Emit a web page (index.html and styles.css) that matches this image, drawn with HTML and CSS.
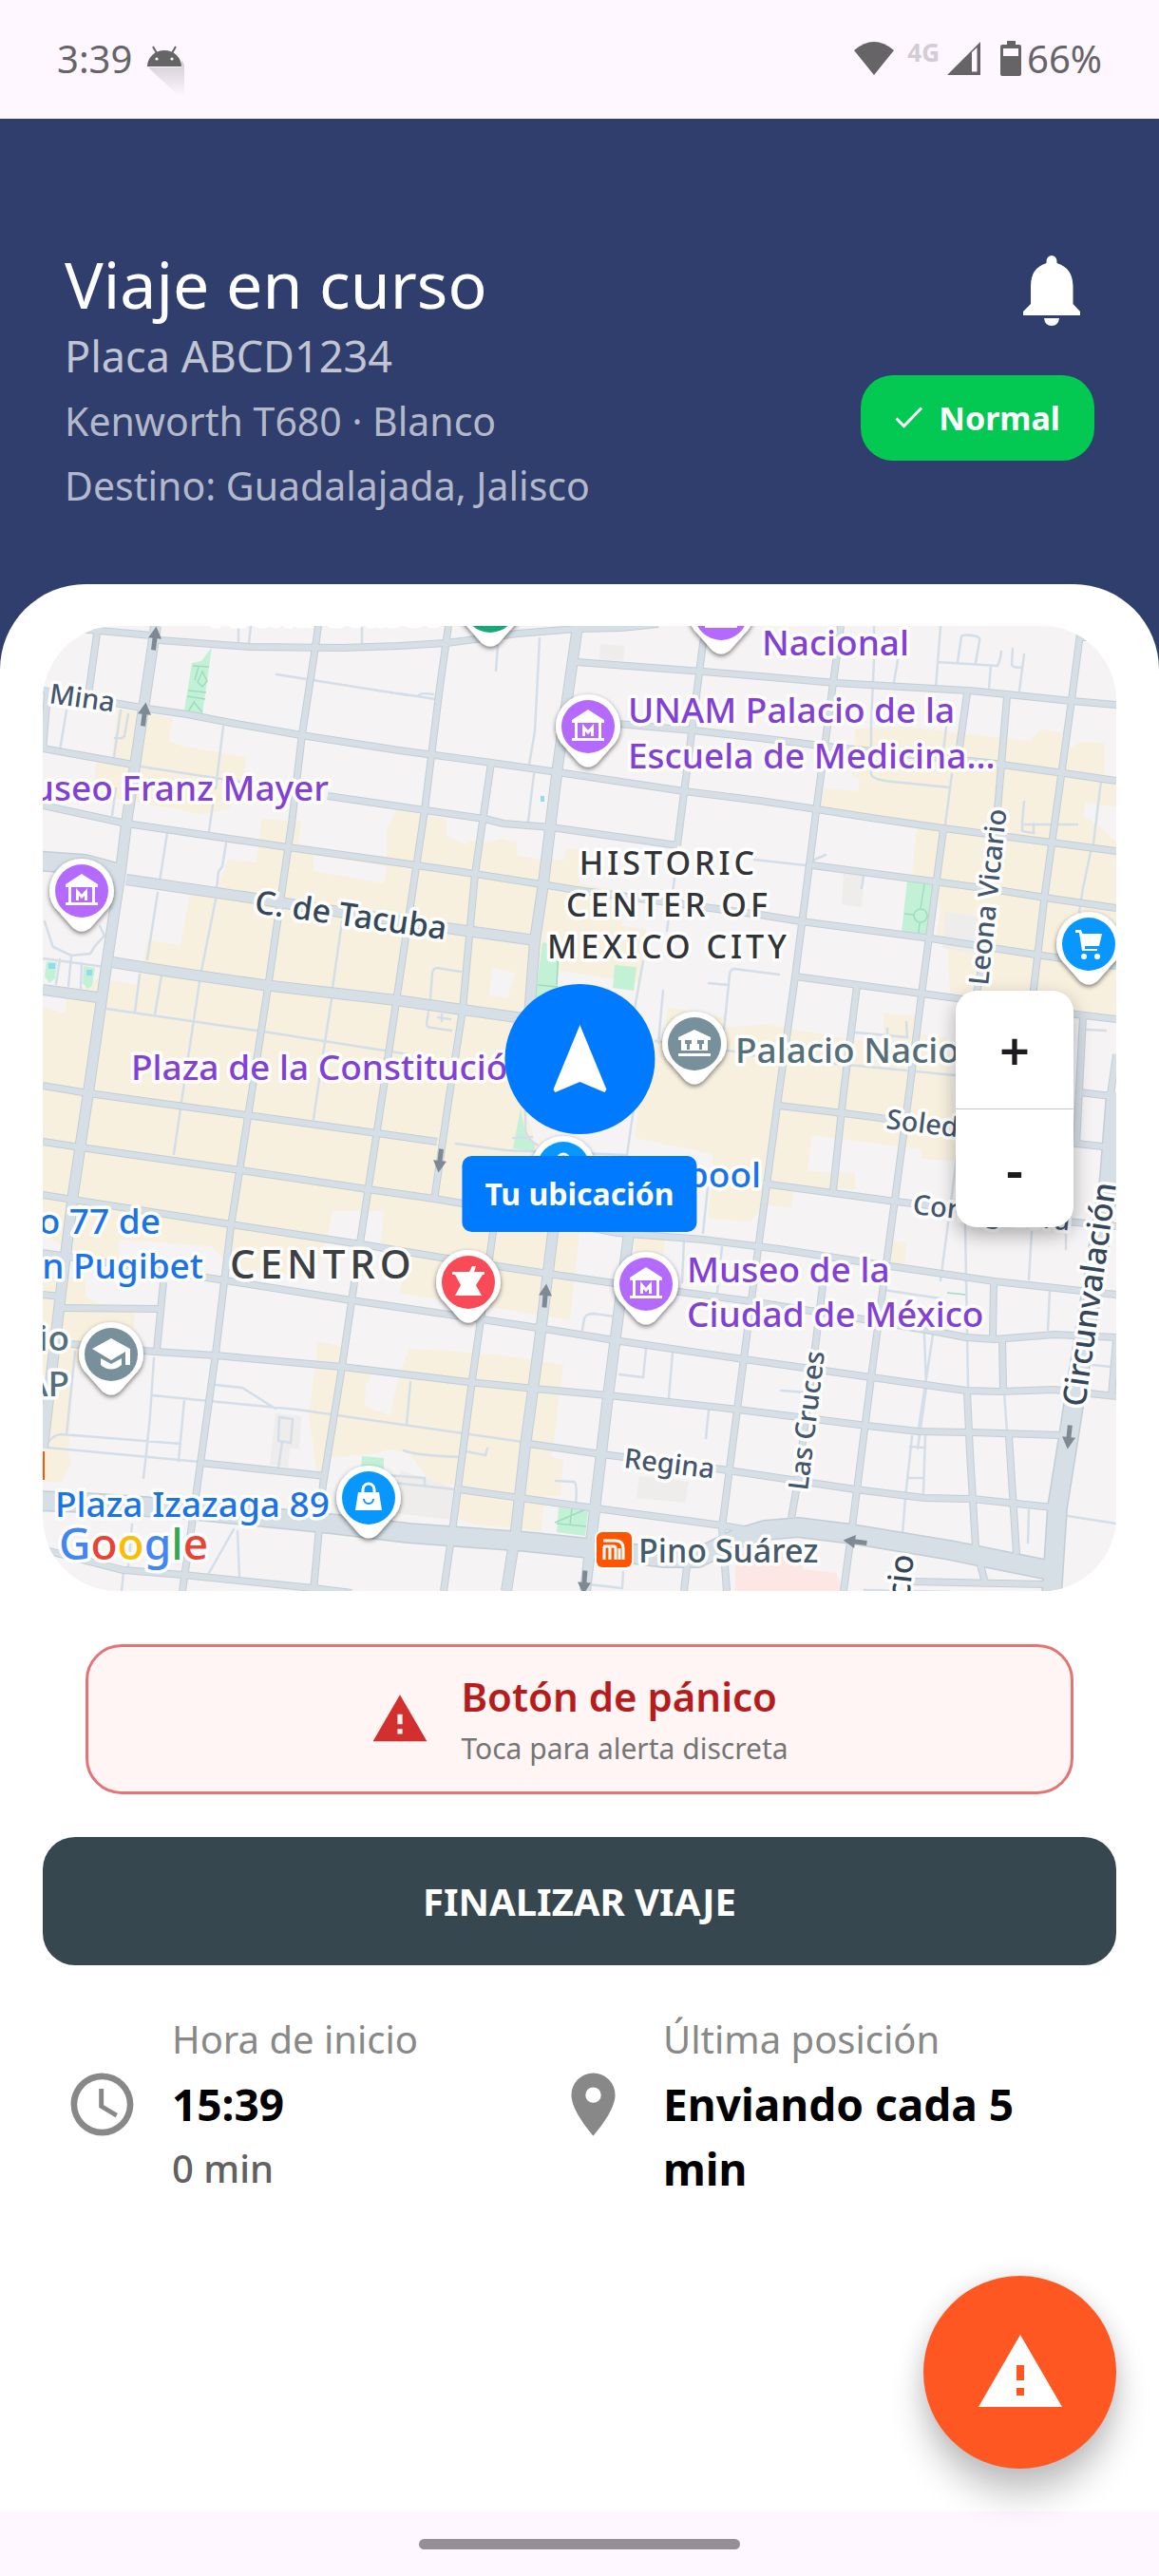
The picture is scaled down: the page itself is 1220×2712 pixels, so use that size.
FILE: index.html
```html
<!DOCTYPE html>
<html lang="es">
<head>
	<meta charset="utf-8">
	<meta name="viewport" content="width=device-width, initial-scale=1">
	<title>Viaje en curso</title>
	<link rel="stylesheet" href="styles.css">
</head>
<body>
	<div class="status-bar">
		<div class="status-left">
			<span>3:39</span>
			<svg class="ico-android" width="40" height="54" viewBox="0 0 40 54">
				<defs><linearGradient id="fade" x1="0" y1="0" x2="0" y2="1"><stop offset="0" stop-color="#676468" stop-opacity=".3"/><stop offset="1" stop-color="#676468" stop-opacity="0"/></linearGradient></defs>
				<path d="M1 24L33 54H39V21L36 16V24z" fill="url(#fade)"/>
				<path d="M0 23a18 17 0 0 1 36 0z" fill="#676468"/>
				<path d="M6 2l4 7M30 2l-4 7" stroke="#676468" stroke-width="2"/>
				<circle cx="10" cy="15" r="1.6" fill="#fef7ff"/><circle cx="26" cy="15" r="1.6" fill="#fef7ff"/>
			</svg>
		</div>
		<div class="status-right">
			<svg class="ico-wifi" width="42" height="36" viewBox="0 0 42 36"><path d="M0 9Q21-9 42 9L21 35z" fill="#676468"/></svg>
			<span class="net">4G</span>
			<svg class="ico-signal" width="36" height="36" viewBox="0 0 36 36"><path d="M0 35L35 0V35zM26 11V31.500H31.500V6z" fill="#676468" fill-rule="evenodd"/></svg>
			<svg class="ico-battery" width="22" height="38" viewBox="0 0 22 38"><path d="M7 0h9v4h4q2 0 2 2v29q0 2-2 2H2q-2 0-2-2V6q0-2 2-2h5zM3 8v8h16V8z" fill="#676468" fill-rule="evenodd"/></svg>
			<span class="percent">66%</span>
		</div>
	</div>

	<header class="header">
		<div class="trip">
			<h1>Viaje en curso</h1>
			<p class="plate">Placa ABCD1234</p>
			<p class="detail">Kenworth T680 · Blanco</p>
			<p class="detail">Destino: Guadalajada, Jalisco</p>
		</div>
		<div class="header-side">
			<button class="bell" type="button" aria-label="Notificaciones">
				<svg width="60" height="74" viewBox="0 0 60 74"><path d="M24.500 8V6a5.500 6 0 0 1 11 0v2Q52 13 52.500 32V51L60 59V63H0V59L8 51V32Q8 13 24.500 8zM22 66H38Q37 74 30 74T22 66z" fill="#fff"/></svg>
			</button>
			<div class="badge">
				<svg width="30" height="24" viewBox="0 0 30 24"><path d="M1.500 12.500L9.500 20.500L28 1.500" fill="none" stroke="#fff" stroke-width="3"/></svg>
				<span>Normal</span>
			</div>
		</div>
	</header>

	<main class="sheet">
		<section class="map">
			<svg class="map-canvas" viewBox="45 659 1130 1016" preserveAspectRatio="xMidYMid slice">
				<defs>
					<filter id="drop" x="-30%" y="-30%" width="160%" height="160%"><feDropShadow dx="0" dy="2" stdDeviation="2.500" flood-opacity=".55"/></filter>
					<path id="drop-shape" d="M0-34A34 34 0 0 1 34 0Q34 13 24 22L9 39Q0 46-9 39L-24 22Q-34 13-34 0A34 34 0 0 1 0-34z" fill="#fff" filter="url(#drop)"/>
					<g id="museum">
						<use href="#drop-shape"/><circle r="28" fill="#b469ff"/>
						<path d="M0-18L17-7V-4H-17V-7zM-14-4h3V12h-3zM11-4h3V12h-3zM-17 12H17V15H-17z" fill="#fff"/>
						<path d="M-4.500 10V1L0 6L4.500 1V10" fill="none" stroke="#fff" stroke-width="3"/>
					</g>
					<path id="arrow" d="M-2.500 12.500V0H-7L0-12.500L7 0H2.500V12.500z" fill="#7f8994"/>
				</defs>
				<rect x="45" y="659" width="1130" height="1016" fill="#f5f3f4"/>

				<!-- zonas -->
				<g fill="#f7f0df">
					<path d="M124 746L182 756L178 780L190 785L259 797L256 825L240 852L212 857L98 836L101 803L117 800z"/>
					<path d="M417 853L470 862L470 880L492 890L493 885L512 887L528 883L544 887V900L568 905L594 905L596 894L614 894L610 930L655 938L654 975L680 978L675 1035L590 1022L560 1060L550 1160L563 1200L560 1292L610 1295L600 1390L540 1380L420 1362L432 1322L400 1315L404 1275L350 1275L345 1300L330 1345L245 1335L222 1312L125 1305V1330L80 1318L45 1300V1060L68 1067L70 1050L103 1030L145 1037L155 990L190 995L200 940L227 940L240 905L270 908L275 862L317 865L314 888L407 905V875z"/>
					<path d="M703 1060L765 1072V1082L804 1078L930 1100V1067L963 1069L960 1088L997 1092L1010 1222L970 1220V1210L855 1195L850 1233L900 1235V1252L835 1250L833 1272L805 1268L790 1286L745 1283L750 1240V1215L668 1198L682 1097L700 1090z"/>
					<path d="M900 767L950 765L1083 780L1097 768L1120 772L1127 787L1140 780L1163 783L1162 815L1175 820V1073L1000 1045L998 998L985 990L990 957L983 928L960 920L965 873L863 850L867 830L903 833L905 820L897 817z"/>
					<path d="M45 1345L90 1345V1365L108 1375L106 1382L142 1382L140 1405L108 1420L78 1440L72 1530L75 1540L65 1560H45z"/>
					<path d="M335 1412L362 1418L358 1440L390 1445L385 1480L410 1490L420 1450L430 1420L470 1422L530 1427L593 1437L583 1517L580 1534L593 1537L590 1575H573L570 1612L500 1605L480 1598L483 1565L453 1560L430 1530L410 1526L395 1530L342 1535L337 1575L325 1490z"/>
					<path d="M668 1300L700 1302L698 1330L668 1325zM938 1306L954 1308L952 1334L938 1332z"/>
				</g>
				<path d="M330 900L407 912L404 930L330 917zM518 1019L542 1024L534 1051L515 1048zM1142 845L1175 850V886L1155 868L1141 860zM385 1455L412 1460L410 1490L384 1480z" fill="#f5f3f4"/>
				<path d="M632 678L658 680L656 696L631 694zM888 920L910 922L907 955L886 952zM996 960L1032 965L1028 1005L992 998zM290 1488L317 1491L315 1525L305 1525L303 1545L284 1542zM422 1548L480 1567L476 1600L405 1592zM673 1554L725 1560L721 1582L670 1577z" fill="#eeedec"/>
				<path d="M774 1650L785 1615L845 1645V1652L880 1656L888 1675H774z" fill="#fde7e5"/>
				<g fill="#c3f1d5">
					<path d="M202 698L212 696L223 681L213 752L194 748z"/>
					<path d="M955 927L982 932L976 984L949 981z"/>
					<path d="M571 992L590 995L586 1045L563 1055zM647 1016L670 1018L667 1043L645 1040z"/>
					<path d="M548 1167L553 1195L563 1205L562 1212L540 1209zM588 1587L619 1591L616 1617L586 1613z"/>
					<path d="M381 1533L404 1535V1550L380 1545zM49 1012L60 1013L58 1030L52 1035L47 1028zM88 1017L100 1019L97 1038L92 1041L87 1035z"/>
				</g>
				<path d="M203 701L220 702M209 702L205 716M213 707L208 718L213 723L218 717zM198 727L217 729M197 733L216 736M205 738L198 749M204 739L213 750M952 962L977 965M973 931L969 956M968 972L967 982M566 1037L587 1039M588 996L586 1037M584 1603L619 1588M586 1604L617 1607M602 1588L600 1606M997 1361L1017 1363" fill="none" stroke="#9edcc0" stroke-width="1.500"/>
				<circle cx="969" cy="964" r="7" fill="#c3f1d5" stroke="#9edcc0" stroke-width="1.500"/>
				<path d="M51 1014h7v6h-7zM91 1021h6v6h-6zM569 838h4v6h-4z" fill="#8fdcf0"/>

				<!-- callejones -->
				<g fill="none" stroke="#d3dee8" stroke-width="2.500" stroke-linecap="round">
					<path d="M251 660V676M264 659L262 677M381 660V677M291 710L430 732M148 807L253 823M235 765L227 830M225 840L220 875M70 748L63 790M127 748L120 797M135 752L131 775Q130 778 121 777M122 830L118 858"/>
					<path d="M176 877L168 928M166 940L155 1010M238 888L234 912L230 918L228 935M227 947L212 1022M210 1034L191 1160L183 1215M147 1026L142 1066M170 1027L163 1068M112 1062L277 1086L430 1110M360 970L350 1040M349 1052L340 1110L330 1178M47 970L55 995L56 997L75 1006L95 1004L100 996L110 985L105 975M45 1009L110 1018M75 1007L72 1038M63 1010L59 1036M86 1014L85 1040"/>
					<path d="M568 672L563 770L557 805M562 815L556 865M524 680L522 706M420 730L458 736M441 732Q442 729 456 731M794 905L848 911M710 925L702 980M677 1012L668 1062M698 1043L693 1098M746 1035L767 1037M820 1026L773 1020Q769 1020 768 1026L762 1085M690 1096L780 1108M780 1110L1005 1132M485 1023L460 1019Q456 1019 455 1025L453 1052M451 1065L449 1078Q449 1082 455 1082L475 1085M461 1071L474 1073M465 1068V1075"/>
					<path d="M920 660V695L917 760V815Q918 821 940 823L999 829M945 695L941 718M990 660L985 724M987 697L1050 701Q1053 695 1054 686M1008 697L1012 670Q1014 667 1028 670Q1032 671 1031 675L1027 698M1043 701L1041 724M1066 683L1065 700Q1066 703 1076 703M1078 689L1073 727M996 766L993 790M1002 815L995 868M855 906L869 900M1078 844L1076 866V875L1088 877V867M1077 868L1134 868M1159 822L1151 888M1148 897L1140 935L1136 960M909 922L907 935M901 1087L955 1092L954 1076M934 1083V1091M1144 1084L1164 1085"/>
					<path d="M79 1423L70 1510M47 1524Q55 1510 65 1510L190 1520M194 1474L188 1538M160 1469L313 1484L550 1518M227 1458L255 1461L290 1483M162 1430L158 1490L154 1530L151 1556M50 1524L210 1539M293 1517L306 1519L308 1494L294 1492zM297 1519L293 1545M432 1455L428 1500M425 1527Q436 1532 483 1534M490 1528L511 1532L513 1525M406 1553L447 1556V1564M406 1560L478 1568M585 1559L604 1560Q608 1561 606 1585M139 1605L135 1650M246 1610L220 1656M250 1612L252 1660M130 1655L128 1675"/>
					<path d="M480 1204L533 1211L660 1216L668 1160M553 1165V1190Q555 1200 565 1205M540 1198L560 1197M745 1250L740 1298M720 1305L718 1350M760 1313L755 1360M613 1400L615 1388Q617 1383 625 1383L647 1386M652 1447L677 1450L680 1420M708 1424L704 1471M746 1485L743 1514M822 1464L850 1466M930 1358L990 1367M990 1348L1003 1250L1008 1210M982 1405L966 1510M1016 1215V1290L1019 1460M1086 1297L1083 1347M1122 1298V1315M1105 1358L1103 1400M973 1405L975 1461L966 1525M960 1512L953 1577L950 1614M974 1512L972 1572M958 1523L974 1524M956 1556L972 1556M1057 1465L1060 1508M1083 1590L1082 1624M1124 1596L1175 1604M1150 1437L1170 1439M620 1668L655 1672L656 1655M910 1674L1000 1676"/>
				</g>

				<!-- calles: borde y relleno comparten trazado -->
				<defs>
					<g id="streets">
						<path d="M82 662L160 669L168 674L263 681L360 682L420 680L470 677L545 667L607 662L653 661L693 657"/>
						<path d="M45 727L155 746L197 752L243 761L317 774L420 790L517 803L587 813L720 833L800 843L860 852L917 861L993 872L1107 887L1175 896"/>
						<path d="M45 788L140 805M345 838L420 849L510 862L530 867L580 871L713 890M855 911L983 928L1050 937L1100 945L1175 956"/>
						<path d="M45 848L133 867L303 892L425 909L500 920L570 931L607 937L800 963L843 970L980 988L1090 1005L1175 1017"/>
						<path d="M607 697L740 707L800 712L880 719L1020 727L1060 731L1128 738L1175 742M650 762L730 769L800 777L880 787L1040 803L1120 814L1175 822"/>
						<path d="M837 1028L970 1046L1007 1051L1133 1068L1175 1073"/>
						<path d="M45 1143L93 1151L260 1174L397 1193L460 1202M820 1164L888 1172L1133 1204L1170 1208M1136 1150L1170 1154"/>
						<path d="M45 1202L85 1208L253 1232L387 1252L457 1262L487 1267L650 1298L740 1305L820 1315L937 1333L1047 1349L1175 1363"/>
						<path d="M803 1246L943 1265L1123 1286L1175 1291"/>
						<path d="M45 1258L243 1289L380 1310L477 1326L577 1341L647 1351L790 1370L903 1388L980 1401L1017 1408L1047 1410L1110 1405L1175 1408"/>
						<path d="M45 1319L237 1348L370 1369L507 1389L573 1399L653 1412L783 1431L917 1450L1017 1464L1053 1465L1110 1463L1175 1470"/>
						<path d="M45 1363L63 1365M65 1377L168 1378M75 1415L163 1423L227 1427L360 1439L493 1455L563 1462L640 1469L777 1484L913 1501L967 1507L1023 1508L1117 1511"/>
						<path d="M557 1520L633 1531L753 1546L820 1556L900 1568L973 1577L1023 1578L1108 1587"/>
						<path d="M210 1540L343 1554M483 1568L620 1587L760 1606L783 1610M48 1632L130 1653L193 1658L330 1672L370 1677M960 1665L1100 1668"/>
						<path d="M102 667L93 732M50 730L45 790M335 659L332 681L318 773L307 867L283 1033L265 1150L243 1291L227 1425L203 1598L192 1675"/>
						<path d="M472 659L463 723L447 853L427 987L403 1150L380 1302L360 1439L340 1563L330 1675"/>
						<path d="M517 803L500 920L487 1063L472 1160L457 1264M520 1290L497 1453L477 1605L467 1675"/>
						<path d="M744 659L740 677L713 890M885 659L860 847L837 1028L820 1150L798 1315L780 1453L760 1608L765 1675"/>
						<path d="M993 873L970 1047L957 1150L917 1450L897 1608L888 1675M1018 730L1010 787M1060 733L1050 853M1037 1000L1027 1050"/>
						<path d="M1137 667L1128 737L1100 940L1087 1050M1137 671L1150 671M902 1038L888 1150L877 1253M1140 1070L1133 1205M1175 1110L1168 1160M867 1345L858 1419L838 1570L833 1598"/>
						<path d="M1046 1350L1045 1407M1055 1410L1056 1463M1018 1465L1021 1530L1027 1629M1062 1512L1070 1636M172 1350L165 1422M1175 1410L1170 1470M1030 1640L1038 1670M724 1640L720 1675"/>
					</g>
					<g id="avenues">
						<path d="M164 659L147 773L133 867L127 917L113 1010L93 1150L77 1257L63 1370L45 1524"/>
						<path d="M118 1013L180 1023L277 1037L417 1053L487 1063L580 1076M45 1042L103 1050M133 926L263 945L363 961L477 978L563 990"/>
						<path d="M608 659L587 807L572 930L563 990L557 1070M583 1290L567 1419L553 1522L543 1611L533 1675M663 1290L640 1470L616 1675"/>
					</g>
					<g id="wide">
						<path d="M40 1580L90 1582L197 1589L347 1604L430 1614L553 1623L620 1630L700 1640L735 1640L775 1620L805 1611L840 1608L897 1615L1000 1632L1114 1655"/>
						<path d="M1175 1150L1168 1240L1133 1460L1125 1512L1113 1587L1107 1680"/>
						<path d="M35 906L90 910L127 920"/>
					</g>
				</defs>
				<use href="#streets" class="road casing"/><use href="#avenues" class="road avenue-casing"/><use href="#wide" class="road wide-casing"/>
				<use href="#streets" class="road fill"/><use href="#avenues" class="road avenue-fill"/><use href="#wide" class="road wide-fill"/>

				<use href="#arrow" transform="translate(163 672) rotate(7)"/>
				<use href="#arrow" transform="translate(152 752) rotate(7)"/>
				<use href="#arrow" transform="translate(463 1222) rotate(187)"/>
				<use href="#arrow" transform="translate(574 1364) rotate(5)"/>
				<use href="#arrow" transform="translate(1125 1513) rotate(186)"/>
				<use href="#arrow" transform="translate(900 1623) rotate(-83)"/>
				<use href="#arrow" transform="translate(615 1666) rotate(184)"/>

				<!-- nombres de calles -->
				<g class="label street">
					<text transform="translate(51 740) rotate(8)">Mina</text>
					<text transform="translate(1040 1038) rotate(-84)">Leona Vicario</text>
					<text transform="translate(850 1570) rotate(-83)">Las Cruces</text>
					<text transform="translate(656 1545) rotate(7)">Regina</text>
					<text transform="translate(932 1188) rotate(7)">Soledad</text>
					<text transform="translate(960 1278) rotate(6)">Corregidora</text>
				</g>
				<g class="label main-street">
					<text transform="translate(267 961) rotate(8)">C. de Tacuba</text>
					<text transform="translate(1142 1482) rotate(-82)">Circunvalación</text>
					<text transform="translate(957 1684) rotate(-84)">cio</text>
				</g>

				<g class="label area">
					<text x="704" y="921">HISTORIC</text>
					<text x="704" y="965">CENTER OF</text>
					<text x="704" y="1009">MEXICO CITY</text>
				</g>
				<text class="label district" x="242" y="1346">CENTRO</text>

				<g class="label place purple">
					<text x="802" y="690">Nacional</text>
					<text x="661" y="761">UNAM Palacio de la</text>
					<text x="661" y="809">Escuela de Medicina...</text>
					<text x="346" y="843" text-anchor="end">useo Franz Mayer</text>
					<text x="138" y="1137">Plaza de la Constitución</text>
					<text x="723" y="1350">Museo de la</text>
					<text x="723" y="1397">Ciudad de México</text>
				</g>
				<text class="label place green" x="225" y="658">Arena Coliseo</text>
				<g class="label place slate">
					<text x="774" y="1119">Palacio Nacional</text>
					<text x="73" y="1422" text-anchor="end">io</text>
					<text x="73" y="1470" text-anchor="end">AP</text>
				</g>
				<text class="label metro" x="672" y="1645">Pino Suárez</text>
				<g class="label place blue">
					<text x="169" y="1299" text-anchor="end">o 77 de</text>
					<text x="214" y="1346" text-anchor="end">n Pugibet</text>
					<text x="801" y="1250" text-anchor="end">Liverpool</text>
					<text x="58" y="1597">Plaza Izazaga 89</text>
				</g>

				<!-- lugares -->
				<use href="#museum" x="86" y="938"/>
				<use href="#museum" x="619" y="765"/>
				<use href="#museum" x="759" y="646"/>
				<use href="#museum" x="680" y="1352"/>
				<g transform="translate(516 638)"><use href="#drop-shape"/><circle r="28" fill="#16a974"/></g>
				<g transform="translate(731 1099)">
					<use href="#drop-shape"/><circle r="28" fill="#78909c"/>
					<path d="M0-15L17-7V-4H-17V-7zM-14-4h28V7H-14zM-17 10H17V13H-17z" fill="#fff"/>
					<path d="M-10-4h7v4h-2v6h-3V0h-2zM3-4h7v4H8v6H5V0H3z" fill="#78909c"/>
				</g>
				<g transform="translate(1146 994)">
					<use href="#drop-shape"/><circle r="28" fill="#0896ff"/>
					<path d="M-14-15h6l1.500 4H14L11 2H-4v3H9v2H-7L-10-12h-4z" fill="#fff"/>
					<circle cx="-5" cy="13" r="3" fill="#fff"/><circle cx="9" cy="13" r="3" fill="#fff"/>
				</g>
				<g transform="translate(493 1350)">
					<use href="#drop-shape"/><circle r="28" fill="#f84a57"/>
					<path d="M-17-11H1l3-6h4l-2 6h11v3h-2L8 3l6 11H-14L-8 3L-14-8h-3z" fill="#fff"/>
				</g>
				<g transform="translate(593 1230)"><use href="#drop-shape"/><circle r="28" fill="#0896ff"/><path d="M-6-5V-9a6 6 0 0 1 12 0v4" fill="none" stroke="#fff" stroke-width="3"/></g>
				<g transform="translate(117 1426)">
					<use href="#drop-shape"/><circle r="28" fill="#78909c"/>
					<path d="M0-17L20-6V11H15V-3L0 6L-20-6zM-11 4L0 10L11 4V11Q0 20-11 11z" fill="#fff"/>
				</g>
				<g transform="translate(388 1577)">
					<use href="#drop-shape"/><circle r="28" fill="#0896ff"/>
					<path d="M-11-6H11L14 13H-14z" fill="#fff"/>
					<path d="M-6-5V-9a6 6 0 0 1 12 0v4" fill="none" stroke="#fff" stroke-width="3"/>
					<path d="M-5 1a5 5 0 0 0 10 0" fill="none" stroke="#0896ff" stroke-width="2"/>
				</g>
				<rect x="626" y="1611" width="41" height="41" rx="8" fill="#fff"/>
				<rect x="628" y="1613" width="37" height="37" rx="6" fill="#ff5400"/>
				<path d="M636 1642V1628M642 1642V1628M648 1642V1630Q648 1628 646 1628H635M652 1642V1630M656 1642V1630Q656 1622 648 1622H635" fill="none" stroke="#fff" stroke-width="3"/>
				<path d="M45 1528h2v30h-2z" fill="#ff5400"/>

				<text class="label google" x="62" y="1642"><tspan fill="#4285f4">G</tspan><tspan fill="#ea4335">o</tspan><tspan fill="#fbbc04">o</tspan><tspan fill="#4285f4">g</tspan><tspan fill="#34a853">l</tspan><tspan fill="#ea4335">e</tspan></text>
			</svg>

			<div class="marker">
				<div class="marker-dot">
					<svg width="60" height="74" viewBox="0 0 60 74"><path d="M30 1L58 69L56 72L30 61L4 72L2 69z" fill="#fff"/></svg>
				</div>
				<div class="marker-label">Tu ubicación</div>
			</div>

			<div class="zoom">
				<button type="button" aria-label="Acercar">+</button>
				<button type="button" aria-label="Alejar">-</button>
			</div>
		</section>

		<button class="panic" type="button">
			<svg width="62" height="62" viewBox="0 0 24 24"><path d="M1 21h22L12 2 1 21zm12-3h-2v-2h2v2zm0-4h-2v-4h2v4z" fill="#d32f2f"/></svg>
			<span class="panic-text">
				<span class="panic-title">Botón de pánico</span>
				<span class="panic-sub">Toca para alerta discreta</span>
			</span>
		</button>

		<button class="finish" type="button">FINALIZAR VIAJE</button>

		<section class="info">
			<div class="info-item">
				<svg width="79" height="79" viewBox="0 0 24 24" fill="#888"><path d="M12 2C6.470 2 2 6.500 2 12a10 10 0 0 0 10 10 10 10 0 0 0 10-10A10 10 0 0 0 12 2m0 18a8 8 0 0 1-8-8 8 8 0 0 1 8-8 8 8 0 0 1 8 8 8 8 0 0 1-8 8m.500-13H11v6l5.250 3.150.750-1.230-4.500-2.670V7z"/></svg>
				<div>
					<p class="info-label">Hora de inicio</p>
					<p class="info-value">15:39</p>
					<p class="info-extra">0 min</p>
				</div>
			</div>
			<div class="info-item">
				<svg width="79" height="79" viewBox="0 0 24 24" fill="#888"><path d="M12 11.500A2.500 2.500 0 0 1 9.500 9 2.500 2.500 0 0 1 12 6.500 2.500 2.500 0 0 1 14.500 9a2.500 2.500 0 0 1-2.500 2.500M12 2a7 7 0 0 0-7 7c0 5.250 7 13 7 13s7-7.750 7-13a7 7 0 0 0-7-7z"/></svg>
				<div>
					<p class="info-label">Última posición</p>
					<p class="info-value">Enviando cada 5 min</p>
				</div>
			</div>
		</section>
	</main>

	<button class="fab" type="button" aria-label="Alerta">
		<svg width="96" height="96" viewBox="0 0 24 24"><path d="M1 21h22L12 2 1 21zm12-3h-2v-2h2v2zm0-4h-2v-4h2v4z" fill="#fff"/></svg>
	</button>

	<div class="nav-bar"><span></span></div>
</body>
</html>
```
FILE: styles.css
```css
* {margin:0; padding:0; box-sizing:border-box;}

body {display:flex; flex-direction:column; min-height:100vh; background:#2f3e6c; font-family:"Noto Sans", "Open Sans", sans-serif; position:relative;}
button {border:0; background:none; font-family:inherit; cursor:pointer;}
svg {display:block; flex:none;}

/* status bar */
.status-bar {display:flex; justify-content:space-between; height:125px; padding:0 60px; background:#fef7ff; color:#676468; font-size:40px; line-height:124px;}
.status-left, .status-right {display:flex; align-items:flex-start;}
.ico-android {margin:47px 0 0 16px;}
.ico-wifi {margin:44px 14px 0 0;}
.net {font-size:26px; font-weight:700; color:#d2ccd3; line-height:110px;}
.ico-signal {margin:44px 20px 0 8px;}
.ico-battery {margin:43px 6px 0 0;}

/* header */
.header {display:flex; justify-content:space-between; padding:132px 68px 70px; color:#fff;}
.header h1 {font-size:68px; font-weight:400; line-height:84px;}
.plate, .detail {line-height:68px;}
.plate {font-size:45px; color:#c1c5d3;}
.detail {font-size:41px; color:#b3b9ca;}
.header-side {display:flex; flex-direction:column; align-items:flex-end; gap:52px; padding-top:12px;}
.bell {padding:0 15px;}
.badge {display:flex; align-items:center; gap:16px; height:90px; padding:0 36px; border-radius:34px; background:#03c953; font-size:34px; font-weight:700;}

/* sheet */
.sheet {flex:1; padding:44px 45px 200px; border-radius:90px 90px 0 0; background:#fff;}

.map {position:relative; overflow:hidden; border-radius:78px;}
.map-canvas {width:100%; height:auto; aspect-ratio:1130 / 1016;}
.road {fill:none; stroke-linejoin:round;}
.casing {stroke:#c3cdd5; stroke-width:8px;}
.fill {stroke:#d6dfe6; stroke-width:6px;}
.avenue-casing {stroke:#c3cdd5; stroke-width:12px;}
.avenue-fill {stroke:#d6dfe6; stroke-width:10px;}
.wide-casing {stroke:#c3cdd5; stroke-width:22px;}
.wide-fill {stroke:#d6dfe6; stroke-width:19px;}

.label {font-weight:500; stroke:#fff; stroke-width:7px; stroke-linejoin:round; paint-order:stroke;}
.place {font-size:37px;}
.street {font-size:29px; fill:#44566e;}
.main-street {font-size:34px; fill:#34475a;}
.metro {font-size:34px; fill:#455b6c;}
.area {font-size:34px; letter-spacing:4px; text-anchor:middle; fill:#333438;}
.district {font-size:42px; letter-spacing:5px; fill:#3c4043;}
.google {font-size:46px;}
.purple {fill:#8340d6;}
.green {fill:#12805c;}
.slate {fill:#546e7a;}
.blue {fill:#1a73e8;}

.marker {position:absolute; top:377px; left:50%; transform:translateX(-50%); display:flex; flex-direction:column; align-items:center; gap:23px;}
.marker-dot {display:flex; align-items:center; justify-content:center; width:158px; height:158px; border-radius:50%; background:#007aff;}
.marker-label {padding:0 24px; border-radius:10px; background:#007aff; color:#fff; font-size:32px; font-weight:700; line-height:80px; white-space:nowrap;}

.zoom {position:absolute; top:384px; right:45px; width:124px; border-radius:22px; background:#fff; box-shadow:0 8px 20px rgba(0,0,0,.3);}
.zoom button {display:block; width:100%; height:124px; color:#1d1b20; font-size:56px; font-weight:600;}
.zoom button + button {height:125px; border-top:1px solid #c9c5d0;}

.panic {display:flex; align-items:center; justify-content:center; gap:33px; width:calc(100% - 90px); height:158px; margin:56px 45px 45px; border:3px solid #e57373; border-radius:38px; background:#fff5f5; text-align:left;}
.panic-text {display:flex; flex-direction:column;}
.panic-title {color:#b71c1c; font-size:42px; font-weight:600; line-height:62px;}
.panic-sub {color:#757575; font-size:30px; line-height:48px;}

.finish {display:block; width:100%; height:135px; border-radius:34px; background:#37474f; color:#fff; font-size:40px; font-weight:700;}

.info {display:grid; grid-template-columns:1fr 1fr; padding:0 73px 0 23px; margin-top:44px;}
.info-item {display:flex; align-items:center; gap:34px; line-height:68px;}
.info-label {color:#888; font-size:40px;}
.info-value {color:#000; font-size:46px; font-weight:700;}
.info-extra {color:#616161; font-size:40px; font-weight:500;}

.fab {position:absolute; right:45px; bottom:113px; display:flex; align-items:center; justify-content:center; width:203px; height:203px; border-radius:50%; background:#ff5722; box-shadow:0 28px 36px rgba(0,0,0,.22), 0 0 24px rgba(0,0,0,.1);}

.nav-bar {display:flex; justify-content:center; align-items:center; height:68px; background:#fef7ff;}
.nav-bar span {width:338px; height:11px; border-radius:6px; background:#948f96;}
```
